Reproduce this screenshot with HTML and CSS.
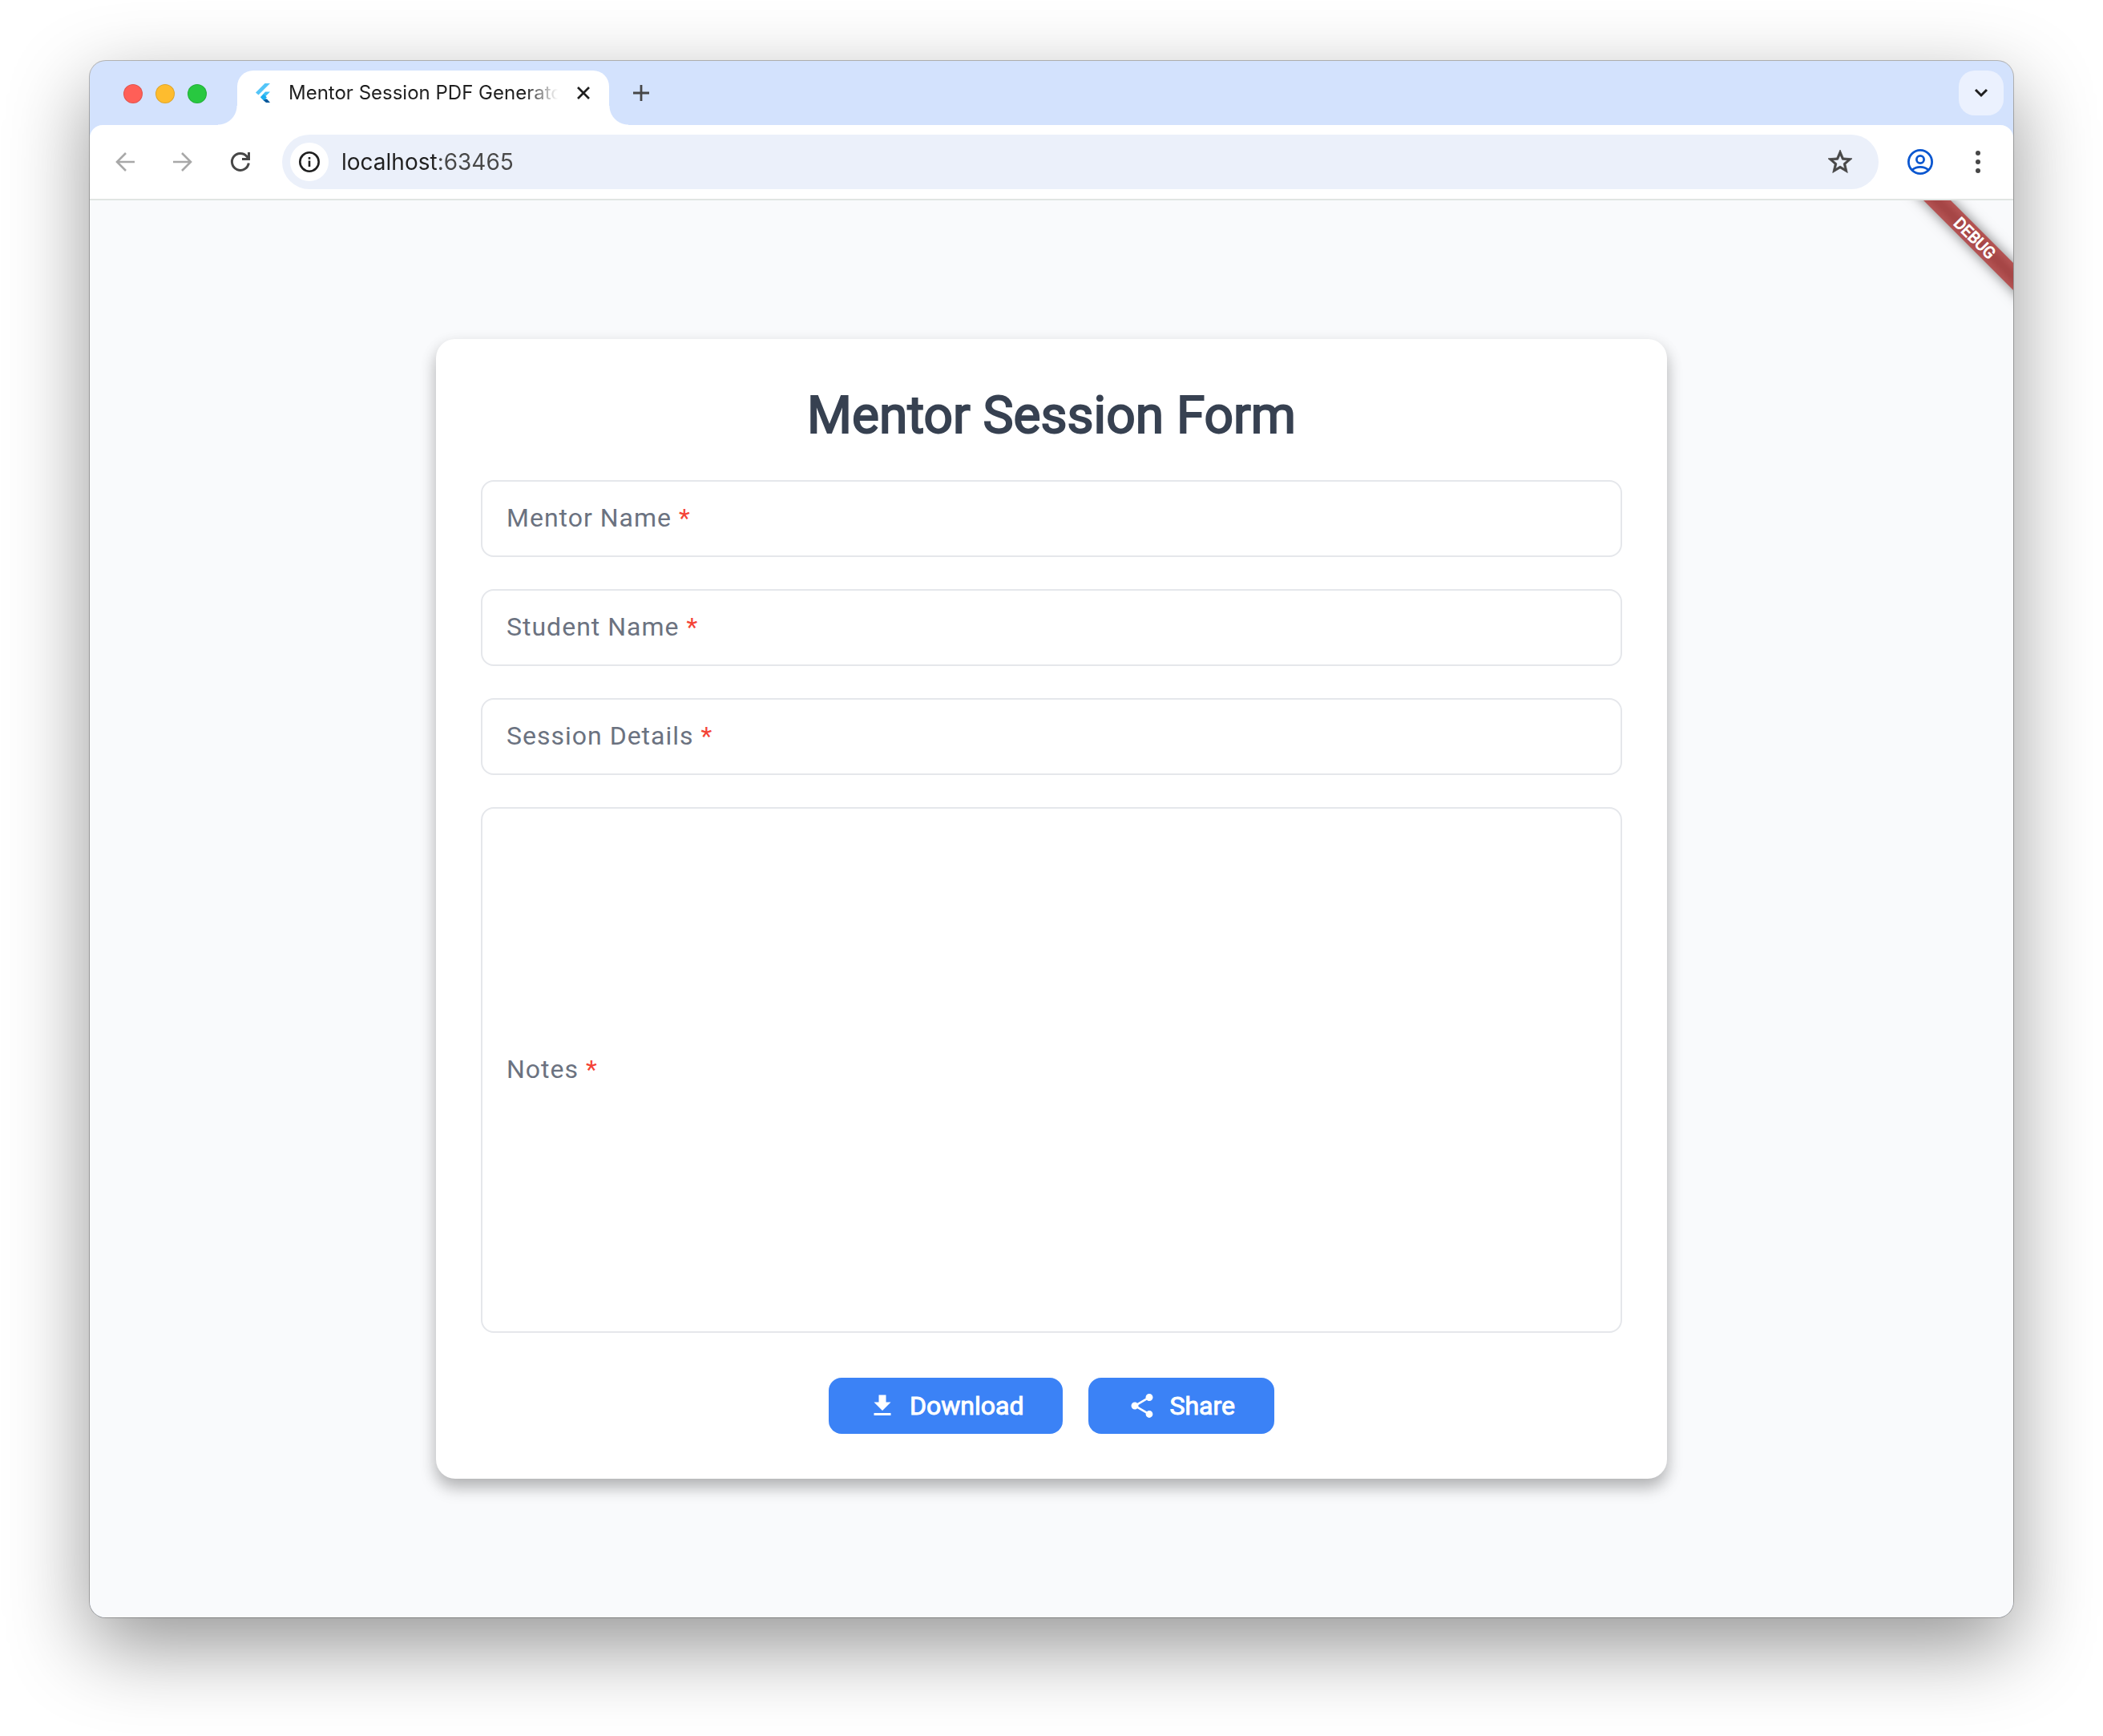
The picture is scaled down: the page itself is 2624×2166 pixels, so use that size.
FILE: index.html
```html
<!DOCTYPE html>
<html lang="en">
<head>
<meta charset="utf-8">
<meta name="viewport" content="width=device-width, initial-scale=1">
<title>Mentor Session PDF Generator</title>
<link rel="stylesheet" href="styles.css">
</head>
<body>
<div class="window">
  <header class="tab-strip">
    <div class="lights">
      <button class="light light-close" type="button" aria-label="Close window"></button>
      <button class="light light-min" type="button" aria-label="Minimize window"></button>
      <button class="light light-max" type="button" aria-label="Zoom window"></button>
    </div>
    <div class="tab">
      <svg class="favicon" viewBox="0 0 32 32" aria-hidden="true">
        <path d="M18.500 4H25L10.500 18.500 7 15.500z" fill="#54c5f8"/>
        <path d="M19 14.500H25l-7 7 4 4h-4L13 21z" fill="#40c0f5"/>
        <path d="M13 21.500l4-4 4 4-4 4z" fill="#1caef0"/>
        <path d="M16.500 25l4.500-1.500 4 4.500h-5z" fill="#01579b"/>
      </svg>
      <span class="tab-title">Mentor Session PDF Generator</span>
      <button class="tab-close" type="button" aria-label="Close tab">
        <svg viewBox="0 0 32 32" aria-hidden="true"><path d="M9 9l14 14M23 9L9 23" fill="none" stroke="#1f1f1f" stroke-width="2.700"/></svg>
      </button>
    </div>
    <button class="icon-button new-tab" type="button" aria-label="New tab">
      <svg viewBox="0 0 40 40" aria-hidden="true"><path d="M20 10v20M10 20h20" fill="none" stroke="#474747" stroke-width="2.800"/></svg>
    </button>
    <button class="icon-button tab-search" type="button" aria-label="Search tabs">
      <svg viewBox="0 0 40 40" aria-hidden="true"><path d="M13 16l7 7 7-7" fill="none" stroke="#1f1f1f" stroke-width="3"/></svg>
    </button>
  </header>

  <nav class="toolbar" aria-label="Browser toolbar">
    <div class="tools">
      <button class="icon-button" type="button" aria-label="Back">
        <svg viewBox="0 0 40 40" aria-hidden="true"><path d="M32 20H10M21 9L10 20l11 11" fill="none" stroke="#a8a8a8" stroke-width="2.600"/></svg>
      </button>
      <button class="icon-button" type="button" aria-label="Forward">
        <svg viewBox="0 0 40 40" aria-hidden="true"><path d="M8 20h22M19 9l11 11-11 11" fill="none" stroke="#a8a8a8" stroke-width="2.600"/></svg>
      </button>
      <button class="icon-button" type="button" aria-label="Reload">
        <svg viewBox="0 0 40 40" aria-hidden="true"><path d="M30.300 21.500A10.500 10.500 0 1 1 28 13.200L30.500 16" fill="none" stroke="#474747" stroke-width="3"/><path d="M29 8h3v10H22v-3h7z" fill="#474747"/></svg>
      </button>
    </div>
    <div class="omnibox">
      <button class="site-info" type="button" aria-label="View site information">
        <svg viewBox="0 0 32 32" aria-hidden="true"><circle cx="16" cy="16" r="11.700" fill="none" stroke="#1f1f1f" stroke-width="2.600"/><path d="M14.700 14.500h2.600v7.500h-2.600zM14.700 10h2.600v2.700h-2.600z" fill="#1f1f1f"/></svg>
      </button>
      <input class="url" type="text" value="localhost:63465" aria-label="Address" spellcheck="false">
      <button class="star" type="button" aria-label="Bookmark this tab">
        <svg viewBox="0 0 24 24" aria-hidden="true"><path d="M22 9.240l-7.190-.620L12 2 9.190 8.630 2 9.240l5.460 4.730L5.820 21 12 17.270 18.180 21l-1.630-7.030L22 9.240zM12 15.400l-3.760 2.270 1-4.280-3.320-2.880 4.380-.380L12 6.100l1.710 4.040 4.380.380-3.320 2.880 1 4.280L12 15.400z" fill="#474747" stroke="#474747" stroke-width=".5"/></svg>
      </button>
    </div>
    <div class="tools">
      <button class="icon-button" type="button" aria-label="Profile">
        <svg viewBox="0 0 40 40" aria-hidden="true"><g fill="none" stroke="#0b57d0" stroke-width="2.800"><circle cx="20" cy="20" r="14.600"/><circle cx="20" cy="17" r="4.600"/><path d="M10 30c3-2.600 6.200-3.600 10-3.600s7 1 10 3.600"/></g></svg>
      </button>
      <button class="icon-button" type="button" aria-label="Menu">
        <svg viewBox="0 0 40 40" aria-hidden="true"><g fill="#474747"><circle cx="20" cy="9" r="3"/><circle cx="20" cy="20" r="3"/><circle cx="20" cy="31" r="3"/></g></svg>
      </button>
    </div>
  </nav>

  <main class="page">
    <div class="debug">DEBUG</div>
    <form class="card">
      <h1>Mentor Session Form</h1>
      <div class="field">
        <input id="mentor" type="text" required>
        <label for="mentor">Mentor Name <span class="required">*</span></label>
      </div>
      <div class="field">
        <input id="student" type="text" required>
        <label for="student">Student Name <span class="required">*</span></label>
      </div>
      <div class="field">
        <input id="details" type="text" required>
        <label for="details">Session Details <span class="required">*</span></label>
      </div>
      <div class="field">
        <textarea id="notes" rows="15" required></textarea>
        <label for="notes">Notes <span class="required">*</span></label>
      </div>
      <div class="actions">
        <button type="button">
          <svg viewBox="0 0 24 24" aria-hidden="true"><path d="M19 9h-4V3H9v6H5l7 7 7-7zM5 18v2h14v-2H5z"/></svg>
          Download
        </button>
        <button type="button">
          <svg viewBox="0 0 24 24" aria-hidden="true"><path d="M18 16.080c-.760 0-1.440.300-1.960.770L8.910 12.700c.050-.230.090-.460.090-.700s-.040-.470-.090-.700l7.050-4.110c.540.500 1.250.810 2.040.810 1.660 0 3-1.340 3-3s-1.340-3-3-3-3 1.340-3 3c0 .240.040.470.090.700L8.040 9.810C7.500 9.310 6.790 9 6 9c-1.660 0-3 1.340-3 3s1.340 3 3 3c.790 0 1.500-.310 2.040-.810l7.120 4.160c-.050.210-.080.430-.080.650 0 1.610 1.310 2.920 2.920 2.920s2.920-1.310 2.920-2.920-1.310-2.920-2.920-2.920z"/></svg>
          Share
        </button>
      </div>
    </form>
  </main>
</div>
</body>
</html>
```
FILE: styles.css
```css
*, *::before, *::after { box-sizing: border-box; }

body {
  margin: 0;
  min-height: 100vh;
  display: flex;
  padding: 76px 112px 148px;
  background: #fff;
  font-family: Roboto, "Liberation Sans", sans-serif;
}

button {
  display: flex;
  align-items: center;
  justify-content: center;
  padding: 0;
  border: 0;
  background: none;
  font-family: inherit;
}

svg { display: block; flex: none; }

.window {
  flex: 1;
  min-width: 0;
  display: flex;
  flex-direction: column;
  overflow: hidden;
  border-radius: 20px;
  background: #d3e2fd;
  box-shadow: 0 0 0 1px rgba(0, 0, 0, .25), 0 36px 100px rgba(0, 0, 0, .42);
}

/* Tab strip */
.tab-strip {
  display: flex;
  height: 80px;
  padding: 12px 12px 0 42px;
}

.lights {
  display: flex;
  align-items: center;
  gap: 16px;
  height: 58px;
  margin-right: 38px;
}

.light {
  width: 24px;
  height: 24px;
  border-radius: 50%;
  border: 1px solid rgba(0, 0, 0, .12);
}
.light-close { background: #ff5f57; }
.light-min { background: #febc2e; }
.light-max { background: #28c840; }

.tab {
  position: relative;
  display: flex;
  align-items: center;
  width: 464px;
  padding: 0 16px 12px;
  border-radius: 20px 20px 0 0;
  background: #fff;
}

/* Concave feet where the tab meets the toolbar */
.tab::before, .tab::after {
  content: "";
  position: absolute;
  bottom: 0;
  width: 24px;
  height: 24px;
}
.tab::before {
  right: 100%;
  background: radial-gradient(circle at 0 0, transparent 23px, #fff 24px);
}
.tab::after {
  left: 100%;
  background: radial-gradient(circle at 100% 0, transparent 23px, #fff 24px);
}

.favicon { width: 32px; height: 32px; margin-right: 16px; }

.tab-title {
  flex: 1;
  min-width: 0;
  margin-right: 16px;
  overflow: hidden;
  white-space: nowrap;
  font: 24px/32px Inter, sans-serif;
  color: #1f1f1f;
  mask-image: linear-gradient(to left, transparent, #000 40px);
}

.tab-close svg { width: 32px; height: 32px; }

.icon-button { width: 56px; height: 56px; }
.icon-button svg { width: 40px; height: 40px; }
.new-tab { margin-left: 12px; }
.tab-search {
  margin-left: auto;
  border-radius: 20px;
  background: #ebf1fe;
}

/* Toolbar */
.toolbar {
  display: flex;
  align-items: center;
  gap: 24px;
  padding: 12px 16px;
  border-bottom: 2px solid #e1e5e3;
  border-radius: 16px 16px 0 0;
  background: #fff;
}

.tools { display: flex; gap: 16px; }

.omnibox {
  flex: 1;
  min-width: 0;
  display: flex;
  align-items: center;
  gap: 16px;
  height: 68px;
  padding: 0 30px 0 10px;
  border-radius: 34px;
  background: #ebf0fa;
}

.site-info {
  width: 48px;
  height: 48px;
  border-radius: 50%;
  background: #fff;
}
.site-info svg { width: 32px; height: 32px; }

.url {
  flex: 1;
  min-width: 0;
  padding: 0;
  border: 0;
  outline: 0;
  font: 28px/40px Inter, sans-serif;
  color: transparent;
  background: linear-gradient(to right, #1f1f1f 120px, #474747 120px);
  background-clip: text;
}

.star svg { width: 36px; height: 36px; }

/* Page */
.page {
  position: relative;
  flex: 1;
  display: flex;
  align-items: center;
  justify-content: center;
  overflow: hidden;
  background: #f9fafc;
}

.debug {
  position: absolute;
  top: 35px;
  right: -72px;
  width: 240px;
  height: 24px;
  transform: rotate(45deg);
  background: linear-gradient(#b55454, #a64646 40%, #a64646 60%, #b55454);
  box-shadow: 0 0 16px rgba(0, 0, 0, .5);
  color: #fff;
  font-size: 20px;
  line-height: 24px;
  text-align: center;
  -webkit-text-stroke: 1px #fff;
}

.card {
  display: flex;
  flex-direction: column;
  gap: 40px;
  width: 64%;
  padding: 56px;
  border-radius: 24px;
  background: #fff;
  box-shadow: 0 12px 20px rgba(0, 0, 0, .22), 0 6px 20px rgba(0, 0, 0, .1);
}

h1 {
  margin: 0;
  font-size: 64px;
  font-weight: 400;
  line-height: 80px;
  text-align: center;
  color: #374151;
  -webkit-text-stroke: 2px #374151;
}

.field { display: grid; }
.field > * { grid-area: 1 / 1; }

.field input, .field textarea {
  display: block;
  width: 100%;
  margin: 0;
  padding: 26px 30px;
  border: 2px solid #e5e7eb;
  border-radius: 16px;
  outline: 0;
  resize: none;
  overflow: auto;
  background: #fff;
  font: 32px/40px Roboto, sans-serif;
  color: #374151;
}

.field label {
  align-self: center;
  justify-self: start;
  padding: 0 0 2px 32px;
  font-size: 32px;
  line-height: 40px;
  letter-spacing: 1px;
  color: #6b7280;
}

.required { color: #f44336; }

.actions {
  display: flex;
  justify-content: center;
  gap: 32px;
  padding-top: 16px;
}

.actions button {
  gap: 16px;
  height: 70px;
  padding: 0 49px;
  border-radius: 16px;
  background: #3b82f6;
  color: #fff;
  font-size: 32px;
  line-height: 40px;
  -webkit-text-stroke: 1px #fff;
}
.actions svg { width: 36px; height: 36px; fill: #fff; }
```
